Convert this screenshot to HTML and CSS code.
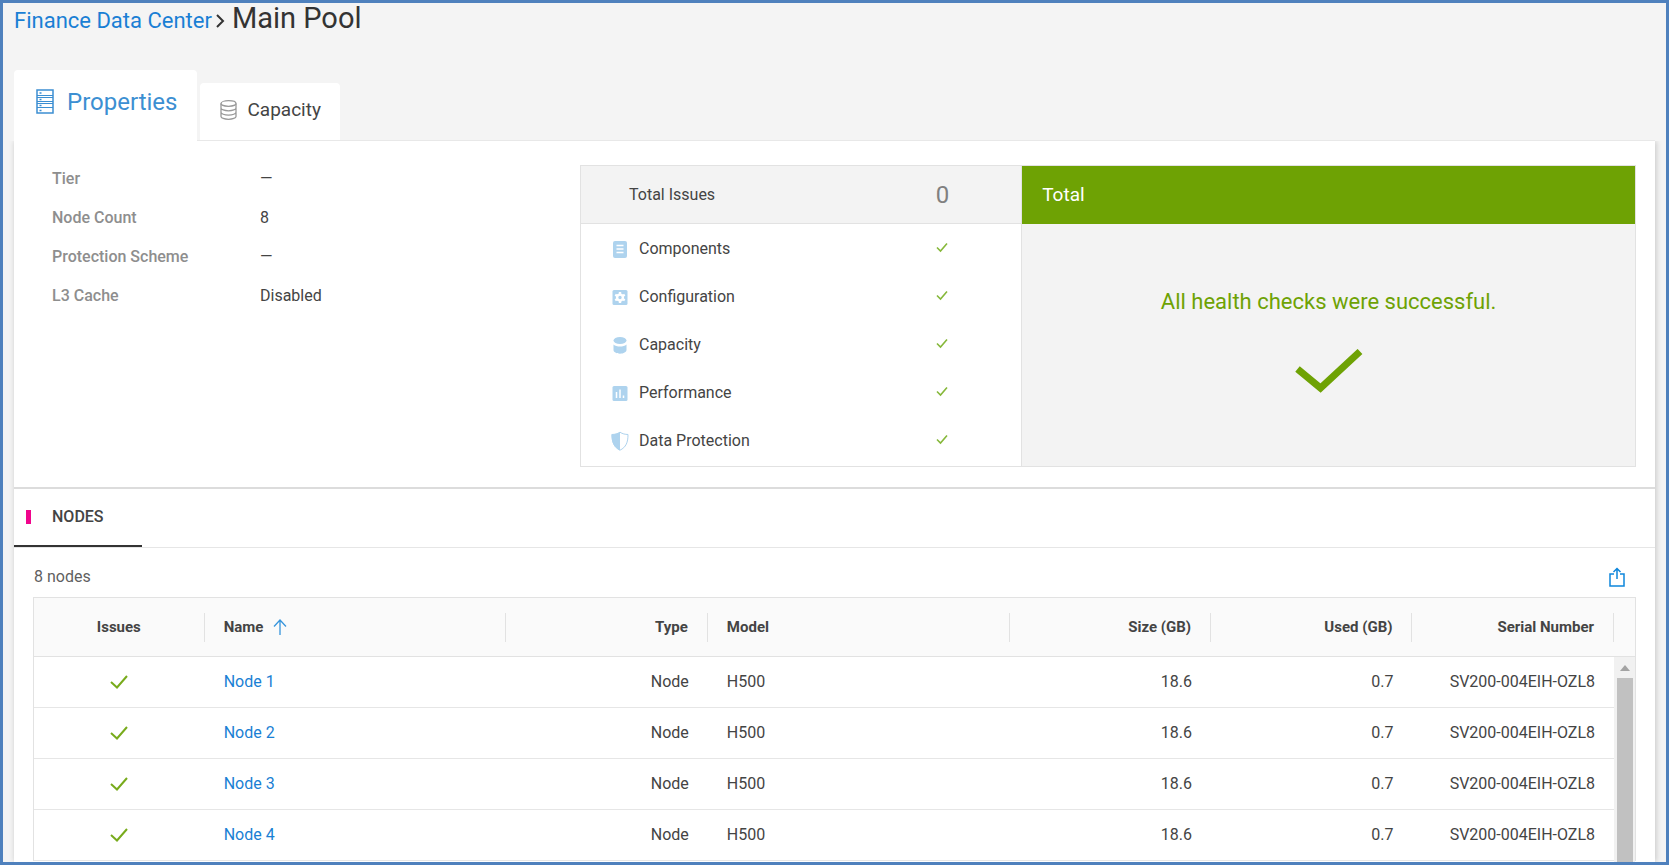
FILE: index.html
```html
<!DOCTYPE html>
<html lang="en">
<head>
<meta charset="utf-8">
<title>Main Pool</title>
<link rel="stylesheet" href="styles.css">
</head>
<body>
<svg class="sprite" aria-hidden="true">
  <symbol id="check" viewBox="0 0 68 44"><path d="M2.500 20 25.500 39 65 2.500" fill="none" stroke="currentColor" stroke-width="7"/></symbol>
  <symbol id="tick" viewBox="0 0 18 14"><path d="M1 7 7 12.500 17 1" fill="none" stroke="currentColor" stroke-width="2"/></symbol>
  <symbol id="tick-bold" viewBox="0 0 12 12"><path d="M1 6.500 4.500 10 11 2.500" fill="none" stroke="currentColor" stroke-width="1.600"/></symbol>
</svg>
<div class="frame">
  <nav class="breadcrumb" aria-label="Breadcrumb">
    <a href="#">Finance Data Center</a>
    <svg class="crumb-arrow" viewBox="0 0 9 14"><path d="M1 1l6 6-6 6" fill="none" stroke="currentColor" stroke-width="2"/></svg>
    <h1>Main Pool</h1>
  </nav>

  <div class="tabs" role="tablist">
    <button class="tab tab-active" role="tab" aria-selected="true">
      <svg class="icon-server" viewBox="0 0 18 25" fill="none" stroke="currentColor">
        <path d="M1 6.500h16M1 8.500h16M1 12.500h16M1 14.500h16M1 18.500h16"/>
        <path d="M3.500 4h2M3.500 10.500h2M3.500 16.500h2M3.500 21.500h2M1 1h16v23H1z" stroke-width="1.500"/>
      </svg>
      Properties
    </button>
    <button class="tab" role="tab" aria-selected="false">
      <svg class="icon-disks" viewBox="0 0 17 20" fill="none" stroke="currentColor" stroke-width="1.300">
        <ellipse cx="8.500" cy="3.500" rx="7.500" ry="2.800"/>
        <path d="M1 3.500v13c0 1.500 3.400 2.800 7.500 2.800s7.500-1.300 7.500-2.800v-13M1 8c0 1.500 3.400 2.800 7.500 2.800S16 9.500 16 8M1 12.300c0 1.500 3.400 2.800 7.500 2.800s7.500-1.300 7.500-2.800"/>
      </svg>
      Capacity
    </button>
  </div>

  <main class="panel">
    <section class="overview">
      <dl class="facts">
        <dt>Tier</dt><dd>—</dd>
        <dt>Node Count</dt><dd>8</dd>
        <dt>Protection Scheme</dt><dd>—</dd>
        <dt>L3 Cache</dt><dd>Disabled</dd>
      </dl>

      <div class="health">
        <div class="issues">
          <div class="issues-head"><span>Total Issues</span><span class="issues-count">0</span></div>
          <ul class="issues-list">
            <li>
              <svg class="icon-issue" viewBox="0 0 20 20"><rect x="3" y="2" width="14" height="17" rx="2" fill="currentColor"/><path d="M6.500 6.500h7M6.500 10h7M6.500 13.500h7" stroke="#fff" stroke-width="1.300"/></svg>
              <span>Components</span><svg class="tick-small"><use href="#tick-bold"/></svg>
            </li>
            <li>
              <svg class="icon-issue" viewBox="0 0 20 20"><rect x="2.500" y="3" width="15" height="15" rx="1.500" fill="currentColor"/><circle cx="10" cy="10.500" r="2.900" fill="none" stroke="#fff" stroke-width="2.400"/><path d="M10 5v2.500M10 13.500V16M5.200 7.800l2.200 1.200M12.600 12l2.200 1.200M5.200 13.200 7.400 12M12.600 9l2.200-1.200" stroke="#fff" stroke-width="2.400"/></svg>
              <span>Configuration</span><svg class="tick-small"><use href="#tick-bold"/></svg>
            </li>
            <li>
              <svg class="icon-issue" viewBox="0 0 20 20" fill="currentColor"><ellipse cx="10" cy="5.500" rx="6.500" ry="3.500"/><path d="M3.500 9.500c1.500 1.400 4 2 6.500 2s5-.6 6.500-2V15c0 2-2.900 3.700-6.500 3.700S3.500 17 3.500 15z"/></svg>
              <span>Capacity</span><svg class="tick-small"><use href="#tick-bold"/></svg>
            </li>
            <li>
              <svg class="icon-issue" viewBox="0 0 20 20"><rect x="2.500" y="3" width="15" height="15" rx="1.500" fill="currentColor"/><path d="M6.500 9v6M10 6.500V15M13.500 12.500V15" stroke="#fff" stroke-width="1.500"/></svg>
              <span>Performance</span><svg class="tick-small"><use href="#tick-bold"/></svg>
            </li>
            <li>
              <svg class="icon-issue" viewBox="0 0 20 20"><path d="M10 1.200C7.500 2.900 5 3.400 2 3.500c0 8 2 12.700 8 15.700 6-3 8-7.700 8-15.700-3-.1-5.500-.6-8-2.300z" fill="none" stroke="currentColor"/><path d="M10 1C7.500 2.700 5 3.200 1.500 3.300c0 8.500 2.500 13 8.500 16.200z" fill="currentColor"/></svg>
              <span>Data Protection</span><svg class="tick-small"><use href="#tick-bold"/></svg>
            </li>
          </ul>
        </div>
        <div class="total">
          <h2>Total</h2>
          <div class="total-body">
            <p>All health checks were successful.</p>
            <svg class="check-large"><use href="#check"/></svg>
          </div>
        </div>
      </div>
    </section>

    <section class="nodes">
      <div class="subtabs" role="tablist">
        <button class="subtab" role="tab" aria-selected="true">NODES</button>
      </div>
      <div class="nodes-body">
        <div class="toolbar">
          <span>8 nodes</span>
          <button class="export" aria-label="Export">
            <svg viewBox="0 0 16 20" fill="none" stroke="currentColor"><path d="M5 7H1v12h14V7h-4" stroke-width="1.500"/><path d="M8 12V1.500M4.500 5 8 1.500 11.500 5" stroke-width="1.500"/></svg>
          </button>
        </div>
        <table class="grid">
          <colgroup>
            <col class="col-small"><col class="col-wide"><col class="col-mid"><col class="col-wide"><col class="col-mid"><col class="col-mid"><col class="col-mid"><col class="col-scroll">
          </colgroup>
          <thead>
            <tr>
              <th class="center"><span>Issues</span></th>
              <th><span>Name<svg class="sort" viewBox="0 0 14 16" fill="none" stroke="currentColor"><path d="M7 16V1M1 7.500 7 1l6 6.500" stroke-width="1.300"/></svg></span></th>
              <th class="right"><span>Type</span></th>
              <th><span>Model</span></th>
              <th class="right"><span>Size (GB)</span></th>
              <th class="right"><span>Used (GB)</span></th>
              <th class="right"><span>Serial Number</span></th>
              <td></td>
            </tr>
          </thead>
          <tbody>
            <tr>
              <td class="center"><svg class="tick"><use href="#tick"/></svg></td><td><a href="#">Node 1</a></td><td class="right">Node</td><td>H500</td><td class="right">18.6</td><td class="right">0.7</td><td class="right">SV200-004EIH-OZL8</td>
              <td class="scroll-cell" rowspan="4">
                <div class="scrollbar">
                  <svg class="scroll-up" viewBox="0 0 10 6"><path d="M0 6 5 0l5 6z" fill="currentColor"/></svg>
                  <div class="thumb"></div>
                </div>
              </td>
            </tr>
            <tr><td class="center"><svg class="tick"><use href="#tick"/></svg></td><td><a href="#">Node 2</a></td><td class="right">Node</td><td>H500</td><td class="right">18.6</td><td class="right">0.7</td><td class="right">SV200-004EIH-OZL8</td></tr>
            <tr><td class="center"><svg class="tick"><use href="#tick"/></svg></td><td><a href="#">Node 3</a></td><td class="right">Node</td><td>H500</td><td class="right">18.6</td><td class="right">0.7</td><td class="right">SV200-004EIH-OZL8</td></tr>
            <tr><td class="center"><svg class="tick"><use href="#tick"/></svg></td><td><a href="#">Node 4</a></td><td class="right">Node</td><td>H500</td><td class="right">18.6</td><td class="right">0.7</td><td class="right">SV200-004EIH-OZL8</td></tr>
          </tbody>
        </table>
      </div>
    </section>
  </main>
</div>
</body>
</html>
```
FILE: styles.css
```css
* { box-sizing: border-box; }

body {
  margin: 0;
  font: 16px/20px Roboto, "Liberation Sans", sans-serif;
  color: #444;
}

h1, h2, p, ul, dl, dd { margin: 0; padding: 0; font-weight: 400; }
ul { list-style: none; }
a { color: #1a7fd4; text-decoration: none; }
button { border: 0; background: none; font: inherit; color: inherit; cursor: pointer; }
svg { display: block; flex: none; }
.sprite { position: absolute; width: 0; height: 0; }

.frame {
  display: flex;
  flex-direction: column;
  height: 100vh;
  overflow: hidden;
  border: 3px solid #4f81bd;
  background: #f4f4f4;
  padding: 0 11px;
}

.breadcrumb {
  display: flex;
  align-items: baseline;
  font-size: 22px;
  line-height: 31px;
}
.breadcrumb h1 { font-size: 29px; line-height: 31px; color: #333; }
.crumb-arrow { width: 9px; height: 14px; margin: 0 7px 0 4px; color: #333; }

.tabs {
  display: flex;
  align-items: flex-end;
  gap: 3px;
  margin-top: 34px;
  border-bottom: 1px solid #e8e8e8;
}
.tab {
  display: flex;
  align-items: center;
  gap: 10px;
  height: 57px;
  padding: 0 19px 3px 20px;
  background: #fff;
  border-radius: 4px 4px 0 0;
  font-size: 19px;
}
.tab-active {
  height: 71px;
  margin-bottom: -1px;
  gap: 13px;
  padding: 0 20px 8px 22px;
  font-size: 24px;
  color: #3c8fd2;
}
.icon-server { width: 18px; height: 25px; }
.icon-disks { width: 17px; height: 20px; color: #999; }

.panel {
  flex: 1;
  background: #fff;
  box-shadow: 1px 0 6px rgba(0, 0, 0, 0.2);
  clip-path: inset(0 -12px 0 -12px);
}

.overview {
  display: grid;
  grid-template-columns: 1fr 2fr;
  padding: 24px 19px 20px 38px;
  border-bottom: 2px solid #dcdcdc;
}
.facts {
  display: grid;
  grid-template-columns: 208px 1fr;
  align-content: start;
  row-gap: 19px;
  padding-top: 4px;
}
.facts dt { font-weight: 500; color: #8e8e8e; }

.health {
  display: grid;
  grid-template-columns: 18fr 25fr;
  border: 1px solid #e2e2e2;
}
.issues { border-right: 1px solid #e2e2e2; }
.issues-head {
  display: flex;
  align-items: center;
  justify-content: space-between;
  height: 58px;
  padding: 0 72px 0 48px;
  background: #f3f3f3;
  border-bottom: 1px solid #e2e2e2;
}
.issues-count { font-size: 24px; color: #808080; }
.issues-list { padding: 1px 0; }
.issues-list li {
  display: flex;
  align-items: center;
  height: 48px;
  padding: 0 73px 0 29px;
}
.issues-list span { flex: 1; padding-left: 9px; }
.icon-issue { width: 20px; height: 20px; color: #aed3ee; }
.tick-small { width: 12px; height: 12px; margin-bottom: 4px; color: #86b83a; }

.total { display: flex; flex-direction: column; background: #f3f3f3; }
.total h2 {
  height: 58px;
  padding-left: 20px;
  background: #6ea204;
  color: #fff;
  font-size: 19px;
  line-height: 58px;
}
.total-body {
  flex: 1;
  display: flex;
  flex-direction: column;
  align-items: center;
  justify-content: center;
  gap: 33px;
  padding-bottom: 10px;
  font-size: 22px;
  line-height: 28px;
  color: #6ea204;
}
.check-large { width: 68px; height: 44px; }

.subtabs { display: flex; border-bottom: 1px solid #e6e6e6; }
.subtab {
  position: relative;
  height: 58px;
  padding: 0 38px;
  border-bottom: 2px solid #333;
  font-weight: 500;
}
.subtab::before {
  content: "";
  position: absolute;
  left: 12px;
  top: 21px;
  width: 5px;
  height: 14px;
  background: #f0048c;
}

.nodes-body { padding: 0 19px; }
.toolbar {
  display: flex;
  align-items: center;
  justify-content: space-between;
  height: 49px;
  padding: 8px 11px 0 1px;
  color: #5f5f5f;
}
.export { padding: 0; color: #0e86dc; }
.export svg { width: 16px; height: 20px; }

.grid {
  width: 100%;
  table-layout: fixed;
  border-collapse: separate;
  border-spacing: 0;
  border: 1px solid #e2e2e2;
  border-bottom: 0;
}
.col-small { width: 10.8%; }
.col-wide { width: 19.1%; }
.col-mid { width: 12.75%; }
.col-scroll { width: 21px; }
.grid th, .grid td { padding: 0 19px; text-align: left; }
.grid thead th, .grid thead td {
  height: 59px;
  padding: 0;
  background: #fafafa;
  border-bottom: 1px solid #e2e2e2;
  font-size: 15px;
  font-weight: 700;
}
.grid th span {
  display: flex;
  align-items: center;
  height: 29px;
  padding: 0 19px;
  border-right: 1px solid #e2e2e2;
}
.grid tbody td { height: 51px; border-bottom: 1px solid #e6e6e6; }
.grid td.right { text-align: right; }
.grid th.right span { justify-content: flex-end; }
.grid th.center span { justify-content: center; }
.grid td.center svg { margin: 0 auto; }
.sort { width: 14px; height: 16px; margin-left: 10px; color: #3795dc; }
.tick { width: 18px; height: 14px; color: #78ab1c; }

.grid .scroll-cell { position: relative; padding: 0; border: 0; background: #f1f1f1; }
.scrollbar {
  position: absolute;
  inset: 0 0 -8px 0;
  display: flex;
  flex-direction: column;
  align-items: center;
  gap: 7px;
  padding-top: 8px;
  background: #f1f1f1;
}
.scroll-up { width: 10px; height: 6px; color: #a3a3a3; }
.thumb { flex: 1; width: 16px; background: #c1c1c1; }
```
